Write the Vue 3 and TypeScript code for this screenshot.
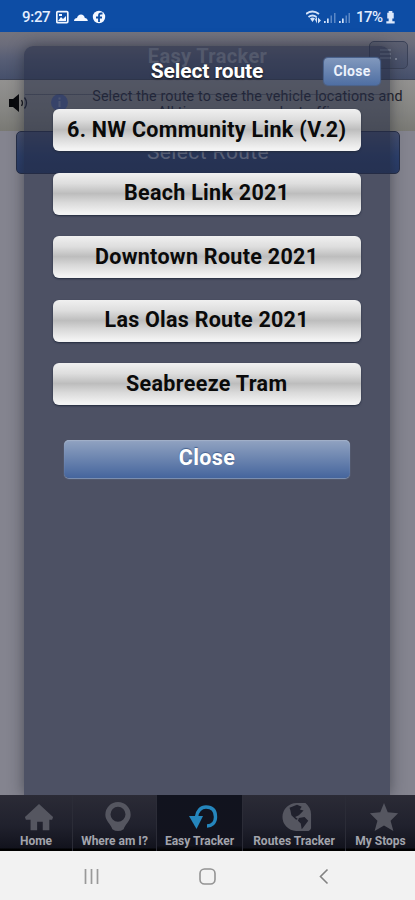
<script setup lang="ts">
const routes: string[] = [
  '6. NW Community Link (V.2)',
  'Beach Link 2021',
  'Downtown Route 2021',
  'Las Olas Route 2021',
  'Seabreeze Tram',
]
// textLength keeps the labels at the widths of the device font
const widths: number[] = [279, 165, 223, 204, 161]
</script>

<template>
  <div class="phone">
    <header class="status">
      <span class="time">9:27</span>
      <svg class="s-left" width="52" height="14" viewBox="0 0 52 14">
        <rect x=".8" y="1.6" width="11" height="11" rx="1" fill="none" stroke="#f4f8ff" stroke-width="1.7" />
        <path d="M2 11l3-4 2 2 3-3v5zM3 4h3v2H3z" fill="#f4f8ff" />
        <path d="M18 11c0-2 1.500-3 3-3 .5-2 2-3.500 4-3.500s3.500 1.500 3.800 3.500c2 0 3 1.500 3 3z" fill="#f4f8ff" />
        <circle cx="43" cy="7" r="6.200" fill="#f4f8ff" />
        <path d="M46.500 3.500H45q-2 0-2 2V12M40 7.500h6" fill="none" stroke="#0d4da5" stroke-width="1.800" />
      </svg>
      <svg class="s-right" width="48" height="16" viewBox="0 0 48 16">
        <g fill="none" stroke="#d3e2f8" stroke-width="1.900">
          <path d="M0 5q6.500-5 13 0M2.500 8q4-3 8 0" />
        </g>
        <path d="M4 9.500q2.500-2 5 0L6.500 13zM9 10.500l2-3v7zM12 8.500v6l3-3z" fill="#d3e2f8" />
        <g fill="#d3e2f8">
          <path d="M18 12h1.700v2H18zM21 9.500h1.700V14H21z" />
          <path d="M33 12h1.700v2H33zM36 9.500h1.700V14H36z" />
          <path d="M24.500 6.500H26V14h-1.500zM28 4h1.500v10H28zM39.500 6.500H41V14h-1.500zM42.500 4H44v10h-1.500z" opacity=".4" />
        </g>
      </svg>
      <span class="battery">17%</span>
      <svg class="s-bat" width="9" height="13" viewBox="0 0 9 14">
        <path d="M2.500 0h4v2H8v6H6.500v3H9v2.500H0V11h2.500V8H1V2h1.500z" fill="#dce8fb" />
      </svg>
    </header>

    <main class="page">
      <div class="titlebar">
        <h1>Easy Tracker</h1>
        <div class="menu">
          <svg width="24" height="16" viewBox="0 0 24 16">
            <path d="M3 3h11M3 7h11M3 11h11" stroke="#7a8297" stroke-width="1.500" />
            <circle cx="19" cy="12" r="1" fill="#9097a8" />
          </svg>
        </div>
      </div>
      <div class="info">
        <svg class="speaker" width="22" height="20" viewBox="0 0 22 20">
          <path d="M1 6h4l6-5v18l-6-5H1z" fill="#08090c" />
          <path d="M13.500 7q2 3 0 6M16.500 4.500q4 5.500 0 11" fill="none" stroke="#15171e" stroke-width="1.300" />
        </svg>
        <svg class="badge" width="17" height="17" viewBox="0 0 17 17">
          <circle cx="8.500" cy="8.500" r="8.500" fill="#53649b" />
          <path d="M8.500 7v6M8.500 3.500v2" stroke="#7f8bae" stroke-width="2" />
        </svg>
        <p>Select the route to see the vehicle locations and<br />All times may vary by traffic</p>
      </div>
      <div class="select">Select Route</div>

      <section class="modal">
        <h2>Select route</h2>
        <button class="close-small">Close</button>
        <div class="list">
          <button v-for="(name, i) in routes" :key="name" class="route">
            <svg width="307" height="41" viewBox="0 0 307 41">
              <text x="153.500" y="26.500" text-anchor="middle" :textLength="widths[i]" class="route-text">{{ name }}</text>
            </svg>
          </button>
        </div>
        <button class="close-big">Close</button>
      </section>
    </main>

    <nav class="tabs">
      <div class="tab t1">
        <svg width="30" height="30" viewBox="0 0 32 32"><path d="M16 2L31 16l-1 3h-3v11h-7v-9h-6v9H7V19H2l-1-3z" /></svg>
        <span>Home</span>
      </div>
      <div class="tab t2">
        <svg width="30" height="30" viewBox="0 0 32 32"><path fill-rule="evenodd" d="M16 0a13.500 13.500 0 0 0-13.500 13.500C2.500 20 8 23 10 29q6 4 12 0c2-6 7.500-9 7.500-15.500A13.500 13.500 0 0 0 16 0zm0 5a8 8 0 1 1 0 16 8 8 0 0 1 0-16z" /></svg>
        <span>Where am I?</span>
      </div>
      <div class="tab t3 active">
        <svg width="30" height="30" viewBox="0 0 30 30">
          <path d="M8.500 15C9 9 13 5 18 5c6 0 9.500 3 9.500 10 0 6-4 9-8.500 9" fill="none" stroke="#2586bd" stroke-width="3.400" />
          <path d="M1 14h14L8.500 27z" fill="#2586bd" />
        </svg>
        <span>Easy Tracker</span>
      </div>
      <div class="tab t4">
        <svg width="30" height="30" viewBox="0 0 32 32">
          <path d="M16 1h9q6 5 6 12v15q-1 3-4 3H15A15 15 0 0 1 16 1z" />
          <path d="M8 6l8-3 5 2-2 3 4 1-5 5-4 2 3 2-2 1-5-5-1-5zM18 17l6-1 4 4-6 8-1 1-1-6-3-3z" fill="#20212d" />
        </svg>
        <span>Routes Tracker</span>
      </div>
      <div class="tab t5">
        <svg width="30" height="30" viewBox="0 0 32 32"><path d="M16 1l4 10 11 1-8 8 3 11-10-6-10 6 3-11-8-8 11-1z" /></svg>
        <span>My Stops</span>
      </div>
    </nav>

    <footer class="system">
      <svg width="17" height="17" viewBox="0 0 17 17"><path d="M2.500 1v15M8.500 1v15M14.500 1v15" stroke="#999" stroke-width="1.700" /></svg>
      <svg width="17" height="17" viewBox="0 0 17 17"><rect x="1" y="1" width="15" height="15" rx="4.500" fill="none" stroke="#939393" stroke-width="1.600" /></svg>
      <svg width="17" height="17" viewBox="0 0 17 17"><path d="M12.500 1.500l-7 7 7 7" fill="none" stroke="#828282" stroke-width="1.600" /></svg>
    </footer>
  </div>
</template>

<style>
body { background: #f1f1f1; overflow: hidden; }
</style>

<style scoped>
* { box-sizing: border-box; margin: 0; }
.phone { width: 415px; height: 900px; display: flex; flex-direction: column; font-family: Roboto, sans-serif; overflow: hidden; }
button { font-family: inherit; border: 0; padding: 0; display: block; }
.status { height: 32px; flex: none; background: #0d4da5; display: flex; align-items: center; color: #e4eeff; padding: 2px 20px 0 22px; }
.time { font-size: 15px; font-weight: 500; width: 34px; letter-spacing: -.3px; }
.s-right { margin-left: auto; }
.battery { font-size: 15px; font-weight: 500; width: 30px; margin-left: 2px; letter-spacing: -.5px; }

.page { height: 763px; flex: none; position: relative; background: #84848f; }
.titlebar { height: 48px; background: linear-gradient(#74747e 0, #6c6d7b 25%, #565d75 60%, #46506b 100%); border-bottom: 1px solid #3d4355; position: relative; }
h1 { font-size: 20px; line-height: 48px; font-weight: 700; text-align: center; color: #9296a2; letter-spacing: .35px; }
.menu { position: absolute; right: 7px; top: 9px; width: 39px; height: 28px; border: 1px solid #3b4258; border-radius: 5px; background: rgba(53, 64, 91, .3); padding: 5px 7px; }
.info { height: 51px; background: linear-gradient(#929190, #858582 60%, #797974); display: flex; position: relative; padding: 13px 0 0 8px; overflow: hidden; }
.info::after { content: ''; position: absolute; left: 25px; right: 26px; top: 14px; height: 1px; background: rgba(45, 50, 68, .45); }
.speaker { flex: none; }
.badge { margin: 1px 0 0 21px; flex: none; }
.info p { margin: -5px 0 0 15px; width: 329px; text-align: center; font-size: 14.300px; line-height: 16px; color: #1f222c; white-space: nowrap; letter-spacing: .16px; }
.select { height: 43px; margin: 0 15px 0 16px; border: 1px solid #252e47; border-radius: 5px; background: linear-gradient(#454f6e, #2c406d 60%, #293b66); color: #a0a8bc; font-size: 21px; line-height: 41px; text-align: center; letter-spacing: .4px; }

.modal { position: absolute; left: 24px; top: 14px; width: 366px; height: 749px; border-radius: 9px 9px 0 0; background: rgba(35, 43, 66, .57); box-shadow: 0 0 15px rgba(30, 32, 42, .55); }
h2 { color: #fff; font-size: 21px; font-weight: 700; line-height: 24px; text-align: center; padding-top: 13px; letter-spacing: -.1px; text-shadow: 0 1px 2px #111; }
.close-small { position: absolute; left: 300px; top: 12px; width: 56px; height: 27px; border-radius: 4px; color: #edf2fc; font-size: 14px; font-weight: 700; background: linear-gradient(#8198bd, #4f6fa3); box-shadow: 0 0 1px 1px #4c6591; letter-spacing: .3px; padding-bottom: 2px; }
.list { display: flex; flex-direction: column; gap: 21.500px; padding: 26px 0 0 29px; }
.route { width: 308px; height: 42px; border-radius: 6px; background: linear-gradient(#f0f0f0 0, #dedede 25%, #bdbdbd 49%, #d9d9d9 70%, #f3f3f3 95%); box-shadow: 0 1px 2px #232b3e; }
.route svg { display: block; }
.route-text { font: 700 21.500px Roboto, sans-serif; fill: #0a0a0a; }
.close-big { width: 286px; height: 38px; margin: 35px 0 0 40px; padding-bottom: 3px; border-radius: 5px; color: #fff; font-size: 21.500px; font-weight: 700; letter-spacing: .4px; background: linear-gradient(#91a3c1, #45659d); box-shadow: inset 0 1px 1px #a2b1c9, 0 1px 1px #8195b7; text-shadow: 0 -1px 1px #45618e; }

.tabs { height: 56px; flex: none; display: flex; background: linear-gradient(#2b2b36, #20212d 55%, #12131d 94%, #000 97%); position: relative; z-index: 1; }
.tab { display: flex; flex-direction: column; align-items: center; padding-top: 7px; color: #a2a4ac; border-right: 1px solid #2b2c37; font-size: 12px; font-weight: 700; line-height: 13px; white-space: nowrap; }
.tab svg { fill: #555660; display: block; flex: none; margin-left: 6px; }
.tab span { margin-top: 3px; }
.t1 { width: 73px; }
.t2 { width: 84px; }
.t3 { width: 86px; }
.t4 { width: 103px; }
.t5 { width: 69px; border-right: 0; }
.active { background: linear-gradient(#11131e, #12131e 90%, #000); }
.system { height: 49px; flex: none; background: #f2f2f2; display: flex; justify-content: space-between; align-items: center; padding: 2px 83px 0; }
</style>
